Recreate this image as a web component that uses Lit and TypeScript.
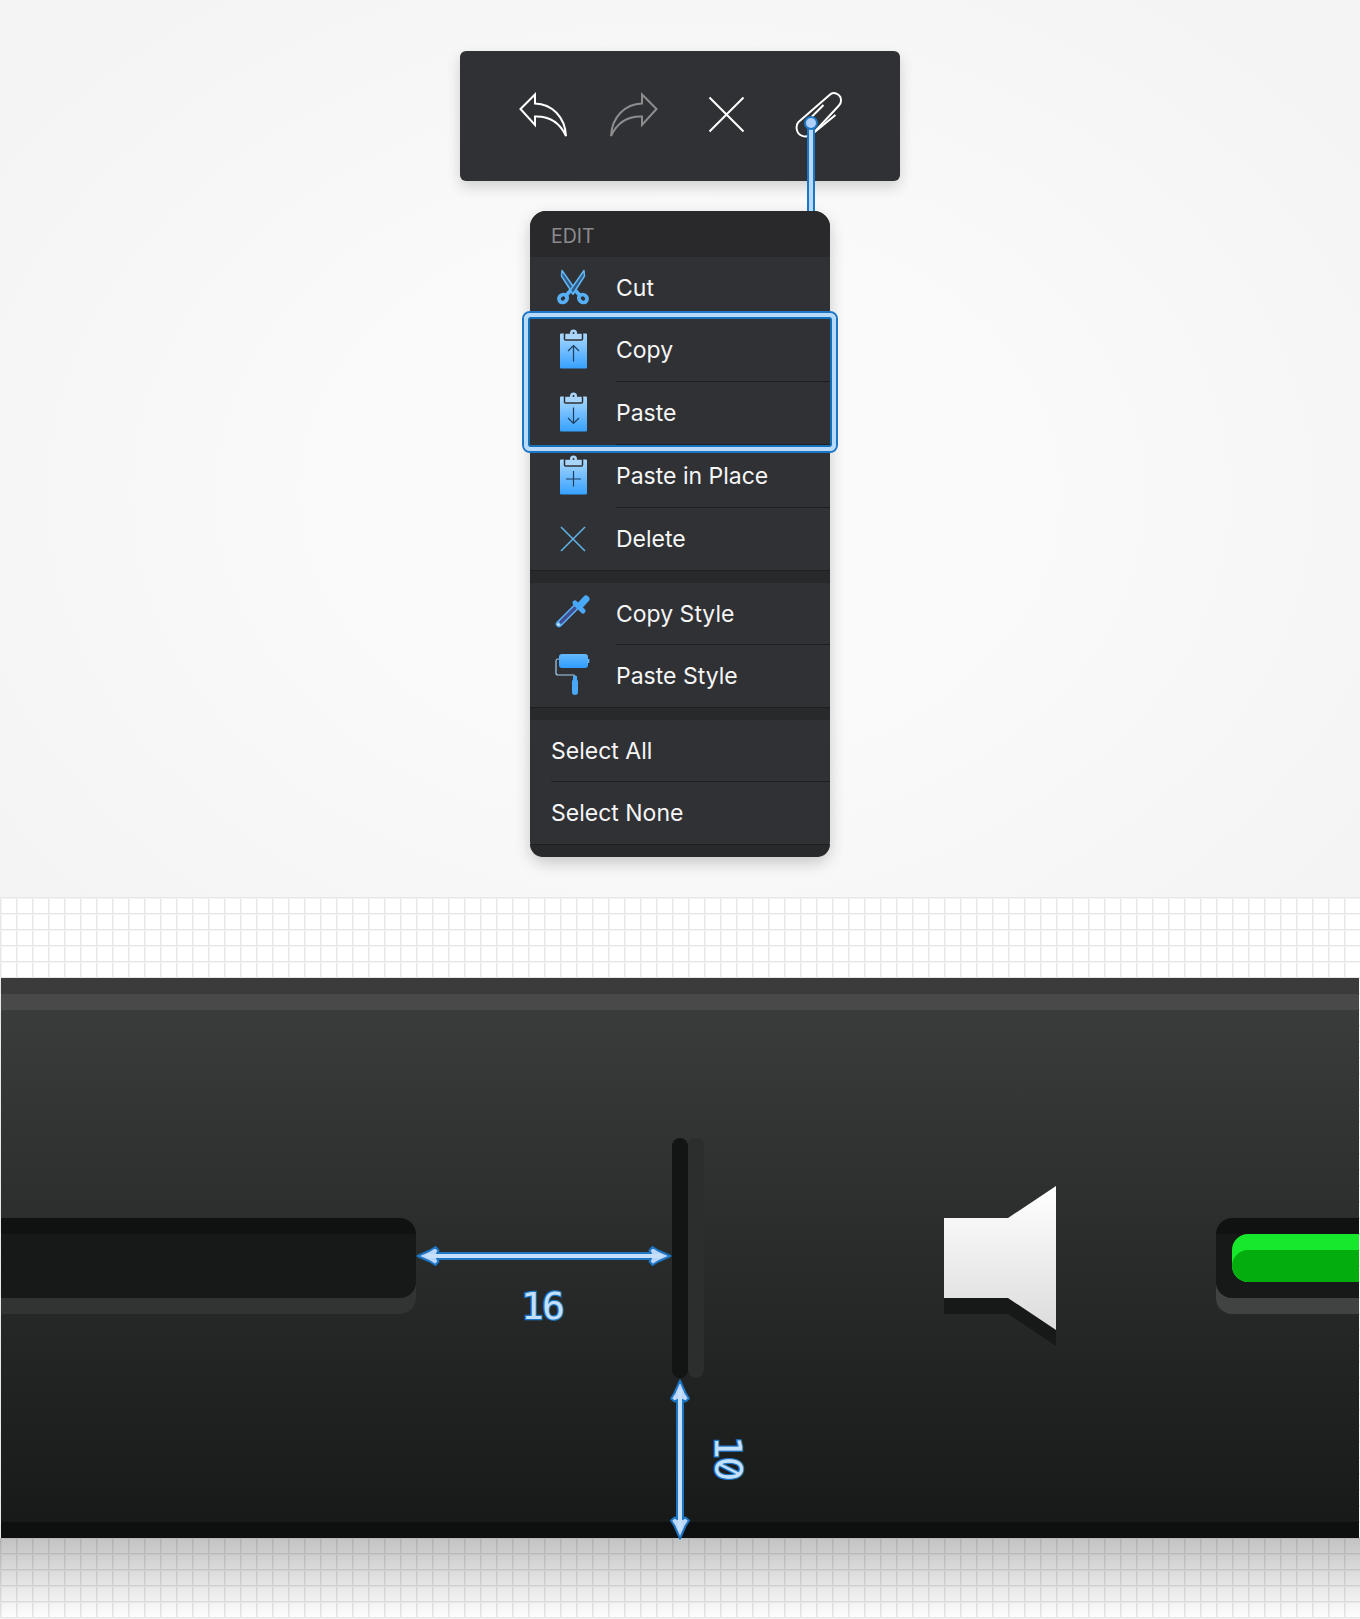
import {LitElement, html, svg, css} from 'lit';
import {customElement} from 'lit/decorators.js';

const clipboard = (id: string, mark: unknown) => html`
  <svg width="27" height="39" viewBox="0 1.5 27 39">
    <defs>
      <linearGradient id=${id} x1="0" y1="0" x2="0" y2="1">
        <stop offset="0" stop-color="#a9d8fd" />
        <stop offset="1" stop-color="#36a1ff" />
      </linearGradient>
    </defs>
    <rect x="0" y="4" width="27" height="35" rx="1" fill="url(#${id})" />
    <rect x="4.5" y="3.5" width="18" height="7" rx="1" fill="#a9d5fb" stroke="#303135" stroke-width="1.5" />
    <circle cx="13.5" cy="3.5" r="3.5" fill="#a9d5fb" />
    <circle cx="13.5" cy="3.5" r="1" fill="#303135" />
    <g fill="none" stroke="#1f3d5c" stroke-width="1.2">${mark}</g>
  </svg>
`;

const icons: Record<string, unknown> = {
  cut: html`
    <svg width="32" height="36" viewBox="0 1 32 36">
      <g fill="#2f5c88" stroke="#62b6f5" stroke-width="1.5" stroke-linejoin="round">
        <path d="M5 1.5 L19 21.5 L16 25 L4.5 7 Z" />
        <path d="M27 1.5 L13 21.5 L16 25 L27.5 7 Z" />
      </g>
      <g fill="none" stroke="#57b0f5" stroke-width="3.8">
        <ellipse cx="6" cy="29.5" rx="4.2" ry="3.8" transform="rotate(-40 6 29.5)" />
        <ellipse cx="26" cy="29.5" rx="4.2" ry="3.8" transform="rotate(40 26 29.5)" />
        <path d="M9.5 26 L14 21 M22.5 26 L18 21" />
      </g>
    </svg>
  `,
  copy: clipboard('cb1', svg`<path d="M13.5 32 V16 M8 21.5 L13.5 16 L19 21.5" />`),
  paste: clipboard('cb2', svg`<path d="M13.5 15 V31 M8 25.5 L13.5 31 L19 25.5" />`),
  place: clipboard('cb3', svg`<path d="M13.5 15.5 V31 M6 23.5 H21" />`),
  del: html`
    <svg width="26" height="26" viewBox="0 0 26 26">
      <path d="M1 1 L25 25 M25 1 L1 25" fill="none" stroke="#5fb4e8" stroke-width="1.5" />
    </svg>
  `,
  dropper: html`
    <svg width="34" height="34" viewBox="1 3 34 34">
      <g fill="none" stroke-linecap="round">
        <path d="M4 30 L20 14" stroke="#5ab0f5" stroke-width="6.5" />
        <path d="M6 28 L20 14" stroke="#3f4f96" stroke-width="3.4" />
        <path d="M20 9 L28 17" stroke="#4aa9f7" stroke-width="5" />
        <path d="M25 11.5 L31 5" stroke="#4aa9f7" stroke-width="7" />
      </g>
      <circle cx="3.5" cy="30.5" r="1.2" fill="#d5e9fb" />
    </svg>
  `,
  roller: html`
    <svg width="36" height="42" viewBox="0 1 36 42">
      <defs>
        <linearGradient id="rl" x1="0" y1="0" x2="0" y2="1">
          <stop offset="0" stop-color="#66b8fb" />
          <stop offset="1" stop-color="#2f9dff" />
        </linearGradient>
      </defs>
      <path d="M4 5 H2.5 Q1 5 1 7 V19 Q1 21 3 21 H18.5 Q20 21 20 22.5 V24" fill="none" stroke="#a5cfee" stroke-width="1.2" />
      <rect x="4" y="0" width="29" height="14" rx="3" fill="url(#rl)" />
      <rect x="32.5" y="5" width="1.8" height="4" fill="#66b8fb" />
      <rect x="18" y="22" width="4" height="4" fill="#4aa9f7" />
      <rect x="17" y="25" width="6" height="16" rx="3" fill="#4aa9f7" />
    </svg>
  `,
};

type Row = {label: string; icon?: string; first?: boolean; last?: boolean};

const groups: Row[][] = [
  [
    {label: 'Cut', icon: 'cut', first: true},
    {label: 'Copy', icon: 'copy'},
    {label: 'Paste', icon: 'paste'},
    {label: 'Paste in Place', icon: 'place'},
    {label: 'Delete', icon: 'del', last: true},
  ],
  [
    {label: 'Copy Style', icon: 'dropper', first: true},
    {label: 'Paste Style', icon: 'roller', last: true},
  ],
  [
    {label: 'Select All', first: true},
    {label: 'Select None', last: true},
  ],
];

const arrowHead = 'M1.5 12 L14 6.5 L19.5 3 L22.5 6.5 L20 12 L22.5 17.5 L19.5 21 L14 17.5 Z';

@customElement('app-root')
export class AppRoot extends LitElement {
  static override styles = css`
    :host {
      display: block;
      width: 1360px;
      height: 1619px;
      overflow: hidden;
      font-family: Inter, "Liberation Sans", sans-serif;
    }

    .top {
      position: relative;
      height: 897px;
      box-sizing: border-box;
      padding-top: 51px;
      display: flex;
      flex-direction: column;
      align-items: center;
      background: radial-gradient(ellipse 62% 70% at 50% 55%, #fafafa 40%, #f4f4f4 100%);
    }

    .toolbar {
      width: 440px;
      height: 130px;
      flex: none;
      box-sizing: border-box;
      padding-left: 59px;
      display: flex;
      align-items: center;
      gap: 43px;
      background: #303135;
      border-radius: 6px;
      margin-bottom: 30px;
      box-shadow: 0 6px 14px rgba(0, 0, 0, 0.16);
    }

    .tool {
      width: 48px;
      height: 48px;
      flex: none;
      display: block;
      overflow: visible;
    }

    .menu {
      position: relative;
      width: 300px;
      flex: none;
      background: #303135;
      border-radius: 16px;
      box-shadow: 0 6px 16px rgba(0, 0, 0, 0.2);
      color: #f6f6f6;
      font-size: 23px;
    }

    .head {
      height: 46px;
      box-sizing: border-box;
      padding: 4px 0 0 21px;
      display: flex;
      align-items: center;
      background: #29292b;
      color: #8b8b8e;
      font-size: 19.5px;
      border-radius: 16px 16px 0 0;
    }

    .row {
      height: 63px;
      display: flex;
    }

    .row.first,
    .row.last {
      height: 62px;
    }

    .ico {
      width: 86px;
      flex: none;
      display: flex;
      align-items: center;
      justify-content: center;
    }

    .ico svg {
      overflow: visible;
    }

    .plain {
      width: 21px;
      flex: none;
    }

    .label {
      flex: 1;
      display: flex;
      align-items: center;
      padding-bottom: 1px;
      box-shadow: inset 0 -1px 0 #1e1f22;
    }

    .row.last .label {
      box-shadow: none;
    }

    .band {
      height: 13px;
      box-sizing: border-box;
      background: #28292b;
      border-top: 1px solid #1e1f22;
    }

    .band.end {
      border-radius: 0 0 16px 16px;
    }

    .selection {
      position: absolute;
      left: -6px;
      top: 102px;
      width: 312px;
      height: 138px;
      box-sizing: border-box;
      border: 4px solid #b7d9fb;
      border-radius: 6px;
      box-shadow: 0 0 0 2px #1c76c4, inset 0 0 0 2px #1470b8;
    }

    .wire {
      position: absolute;
      left: 807px;
      top: 122px;
      width: 8px;
      height: 89px;
      box-sizing: border-box;
      background: #b7dafc;
      border: solid #1c76c4;
      border-width: 0 2px;
    }

    .dot {
      position: absolute;
      left: 804px;
      top: 116px;
      width: 14px;
      height: 14px;
      box-sizing: border-box;
      border-radius: 50%;
      background: #b0d0fb;
      border: 2px solid #1c76c4;
    }

    .bottom {
      height: 722px;
      display: flex;
      flex-direction: column;
      background-color: #fff;
      background-image:
        linear-gradient(#e7e7e7 1px, #f3f3f3 1px, #f3f3f3 2px, transparent 2px),
        linear-gradient(90deg, #e7e7e7 1px, #f3f3f3 1px, #f3f3f3 2px, transparent 2px);
      background-size: 16px 16px;
    }

    .panel {
      position: relative;
      margin: 81px 1px 0;
      height: 560px;
      flex: none;
      display: flex;
      flex-direction: column;
      background: #3a3b3a;
    }

    .cap {
      height: 16px;
      flex: none;
    }

    .stripe {
      height: 16px;
      flex: none;
      background: #484948;
    }

    .body {
      flex: 1;
      display: flex;
      align-items: center;
      background: linear-gradient(#3a3c3b, #181a1a);
    }

    .foot {
      height: 16px;
      flex: none;
      background: #0e0f0f;
    }

    .slot {
      width: 415px;
      height: 80px;
      flex: none;
      border-radius: 0 16px 16px 0;
      background: linear-gradient(#101211 15px, #171918 17px);
      box-shadow: 0 16px 0 #323333;
      margin-bottom: 16px;
    }

    .divider {
      width: 16px;
      height: 240px;
      flex: none;
      margin: 0 0 16px 256px;
      border-radius: 8px;
      background: #131514;
      box-shadow: 16px 0 0 #2c2d2d;
    }

    .speaker {
      width: 112px;
      height: 160px;
      flex: none;
      margin-left: 256px;
      display: block;
    }

    .well {
      flex: 1;
      height: 80px;
      margin: 0 0 16px 160px;
      box-sizing: border-box;
      padding: 16px 0 16px 16px;
      border-radius: 16px 0 0 16px;
      background: linear-gradient(#101211 15px, #171918 17px);
      box-shadow: 0 16px 0 #414342;
    }

    .fill {
      height: 48px;
      border-radius: 16px 0 0 16px;
      background: #17e82b;
      overflow: hidden;
      box-sizing: border-box;
      padding-top: 16px;
    }

    .fill::after {
      content: '';
      display: block;
      height: 32px;
      border-radius: 16px 0 0 16px;
      background: #04ad0e;
    }

    .fade {
      height: 81px;
      flex: none;
      background: linear-gradient(rgba(0, 0, 0, 0.24), rgba(0, 0, 0, 0));
    }

    .arrow {
      position: absolute;
      display: block;
    }

    .arrow-h {
      left: 415px;
      top: 266px;
    }

    .arrow-v {
      left: 667px;
      top: 401px;
    }

    .dim {
      position: absolute;
      font-family: "DejaVu Sans Mono", monospace;
      font-size: 38px;
      letter-spacing: -2px;
      line-height: 40px;
      color: #c5e0fb;
      -webkit-text-stroke: 2.5px #1c76c4;
      paint-order: stroke fill;
    }

    .dim-16 {
      left: 520px;
      top: 308px;
    }

    .dim-10 {
      left: 706px;
      top: 459px;
      transform: rotate(90deg);
    }

    .slashed {
      font-family: Inter, sans-serif;
      font-feature-settings: "zero" 1;
    }
  `;

  private renderRow(row: Row) {
    return html`
      <div class="row ${row.first ? 'first' : ''} ${row.last ? 'last' : ''}">
        ${row.icon
          ? html`<div class="ico">${icons[row.icon]}</div>`
          : html`<div class="plain"></div>`}
        <div class="label">${row.label}</div>
      </div>
    `;
  }

  override render() {
    return html`
      <section class="top">
        <div class="toolbar">
          <svg class="tool" viewBox="0 0 48 48" fill="none" stroke="#fff" stroke-width="2">
            <path d="M1.5 17 L16 2.5 V11.5 C33 12 46 25 47 44 C41 31 30 24 16 24.5 V33 Z" />
          </svg>
          <svg class="tool" viewBox="0 0 48 48" fill="none" stroke="#8d8d8f" stroke-width="2">
            <path d="M46.5 17 L32 2.5 V11.5 C15 12 2 25 1 44 C7 31 18 24 32 24.5 V33 Z" />
          </svg>
          <svg class="tool" viewBox="0 0 48 48" fill="none" stroke="#fff" stroke-width="2">
            <path d="M8.5 5.5 L42.5 39.5 M42.5 5.5 L8.5 39.5" />
          </svg>
          <svg class="tool" viewBox="0 0 48 48" fill="none" stroke="#fff" stroke-width="2">
            <g transform="translate(3.5 0)">
              <path d="M3 30 L34 3 C38 -1 46 2 45.5 9 C45.5 11 44 13 43 14 L18 41 C11 47 2 45 1 36 Q1 32 3 30 Z" />
              <path d="M28 13 L10 31 M40 23 L18 41" />
            </g>
          </svg>
        </div>
        <div class="menu">
          <div class="head">EDIT</div>
          ${groups.map(
            (group, i) => html`
              ${group.map((row) => this.renderRow(row))}
              <div class="band ${i === groups.length - 1 ? 'end' : ''}"></div>
            `
          )}
          <div class="selection"></div>
        </div>
        <div class="wire"></div>
        <div class="dot"></div>
      </section>
      <section class="bottom">
        <div class="panel">
          <div class="cap"></div>
          <div class="stripe"></div>
          <div class="body">
            <div class="slot"></div>
            <div class="divider"></div>
            <svg class="speaker" viewBox="0 0 112 160">
              <defs>
                <linearGradient id="cone" x1="0" y1="0" x2="0" y2="144" gradientUnits="userSpaceOnUse">
                  <stop offset="0" stop-color="#fff" />
                  <stop offset="1" stop-color="#dcdcdc" />
                </linearGradient>
              </defs>
              <path d="M0 32 H64 L112 0 V144 L64 112 H0 Z" fill="#171918" transform="translate(0 16)" />
              <path d="M0 32 H64 L112 0 V144 L64 112 H0 Z" fill="url(#cone)" />
            </svg>
            <div class="well"><div class="fill"></div></div>
          </div>
          <div class="foot"></div>
          <svg class="arrow arrow-h" width="256" height="24" viewBox="0 0 256 24">
            <path d="M10 12 H246" stroke="#1c76c4" stroke-width="8" />
            <path d=${arrowHead} fill="#bcd6fb" stroke="#1c76c4" stroke-width="2" stroke-linejoin="round" />
            <path d=${arrowHead} fill="#bcd6fb" stroke="#1c76c4" stroke-width="2" stroke-linejoin="round" transform="translate(256 0) scale(-1 1)" />
            <path d="M10 12 H246" stroke="#c4e0fd" stroke-width="4" />
          </svg>
          <svg class="arrow arrow-v" width="24" height="161" viewBox="0 0 24 161">
            <path d="M12 10 V151" stroke="#1c76c4" stroke-width="8" />
            <path d=${arrowHead} fill="#bcd6fb" stroke="#1c76c4" stroke-width="2" stroke-linejoin="round" transform="rotate(90 12 12)" />
            <path d=${arrowHead} fill="#bcd6fb" stroke="#1c76c4" stroke-width="2" stroke-linejoin="round" transform="translate(0 161) scale(1 -1) rotate(90 12 12)" />
            <path d="M12 10 V151" stroke="#c4e0fd" stroke-width="4" />
          </svg>
          <div class="dim dim-16">16</div>
          <div class="dim dim-10">1<span class="slashed">0</span></div>
        </div>
        <div class="fade"></div>
      </section>
    `;
  }
}

declare global {
  interface HTMLElementTagNameMap {
    'app-root': AppRoot;
  }
}
